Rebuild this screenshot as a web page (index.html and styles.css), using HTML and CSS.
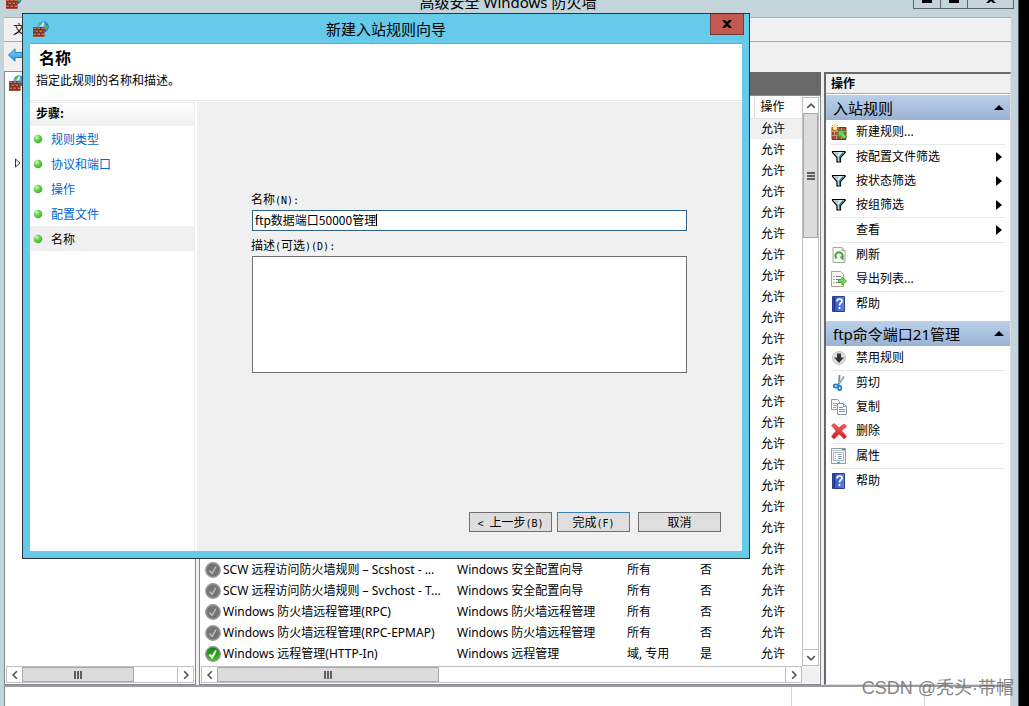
FILE: index.html
```html
<!DOCTYPE html>
<html lang="zh-CN">
<head>
<meta charset="utf-8">
<title>高级安全 Windows 防火墙</title>
<link rel="stylesheet" href="styles.css">
</head>
<body>
<svg class="sprite" aria-hidden="true">
  <defs>
    <radialGradient id="g-globe" cx="0.35" cy="0.35" r="0.7"><stop offset="0" stop-color="#c4f0ff"/><stop offset="0.5" stop-color="#3f9be0"/><stop offset="1" stop-color="#1a4ba8"/></radialGradient>
    <radialGradient id="g-dot" cx="0.35" cy="0.3" r="0.75"><stop offset="0" stop-color="#d5f5cd"/><stop offset="0.5" stop-color="#62cf45"/><stop offset="1" stop-color="#3fae2a"/></radialGradient>
    <linearGradient id="g-back" x2="0" y2="1"><stop offset="0" stop-color="#8fd6fa"/><stop offset="1" stop-color="#1f8fdc"/></linearGradient>
    <linearGradient id="g-help" x2="1" y2="0"><stop offset="0" stop-color="#26409e"/><stop offset="0.25" stop-color="#3c5cc4"/><stop offset="1" stop-color="#5f84e0"/></linearGradient>
    <linearGradient id="g-red" x2="0" y2="1"><stop offset="0" stop-color="#f4605c"/><stop offset="1" stop-color="#cf1d1d"/></linearGradient>
    <linearGradient id="g-ok" x2="0" y2="1"><stop offset="0" stop-color="#127a10"/><stop offset="1" stop-color="#3fc81e"/></linearGradient>
  </defs>
  <symbol id="firewall" viewBox="0 0 16 16">
    <circle cx="10" cy="5.800" r="5.600" fill="url(#g-globe)"/>
    <path d="M6 2l2.500-1.200 1 1.200-1.500 2-2 1.500zM12.500 3.500l2 0.500 0.500 3-1.500 2.500-1.500-2z" fill="#4fbb4c"/>
    <path d="M10.500 1.500q-1.500 1.500-.5 3.500" stroke="#e6f8ff" stroke-width="1.500" fill="none"/>
    <path d="M0 6h11.500v10h-11.500z" fill="#a94c39"/>
    <path d="M0 8.500h11.500M0 11.500h11.500M0 14.500h11.500M3.500 6v2M7.500 6v2M1.500 9v2M5.500 9v2M9.500 9v2M3.500 12v2M7.500 12v2" stroke="#7a3527" fill="none"/>
    <path d="M1 7.500h2M5 7.500h2M9 7.500h2M3 10.500h2M7 10.500h2M1 13.500h2M5 13.500h2M9 13.500h2" stroke="#c4765f" fill="none"/>
  </symbol>
  <symbol id="newrule" viewBox="0 0 16 16">
    <path d="M1 3.500h14v12h-14z" fill="#a65140" stroke="#70352a"/>
    <path d="M1 7.500h14M1 11.500h14M5.500 4v3M10.500 4v3M3.500 8v3M8.500 8v3M12.500 8v3M5.500 12v3M10.500 12v3" stroke="#c99585" fill="none"/>
    <path d="M4 0v8M0 4h8M1 1l6 6M7 1l-6 6" stroke="#f4a72c"/><circle cx="4" cy="4" r="2" fill="#fff3a0"/>
    <path d="M7 7l7-0.500-2 2 3.500 4-2.500 2.500-3.500-4-2 2z" fill="#6ddb59" stroke="#2f9a26" stroke-width="0.800"/>
  </symbol>
  <symbol id="filter" viewBox="0 0 16 16">
    <path d="M1.500 2.500h12.500v1l-4.500 5v4.500h-3.500v-4.500l-4.500-5z" fill="#dfe8e8" stroke="#000" stroke-width="1.200"/>
    <path d="M12.500 3.500l-4 4.500v4.500" stroke="#138a8a" stroke-width="1.500" fill="none"/>
    <path d="M3.500 3.500h4l-1 3z" fill="#b2b8b8"/>
  </symbol>
  <symbol id="refresh" viewBox="0 0 16 16">
    <path d="M2 .5h9l3 3v12h-12z" fill="#fbfbf7" stroke="#a6a69a"/><path d="M11 .5v3h3" fill="#ddd" stroke="#a6a69a"/>
    <path d="M5.500 11.500a3.600 3.600 0 1 1 5 0" fill="none" stroke="#35a835" stroke-width="2"/><path d="M8.500 9.500h4v4.500z" fill="#35a835"/>
  </symbol>
  <symbol id="export" viewBox="0 0 16 16">
    <path d="M.5 .5h9l3 3v12h-12z" fill="#fffdec" stroke="#a9a68c"/>
    <path d="M2.500 5.500h1M2.500 8.500h1M2.500 11.500h1M5 5.500h5M5 8.500h4M5 11.500h4" stroke="#6675a0"/>
    <path d="M7.500 8.500h3.500v-2.500l4.500 4-4.500 4v-2.500h-3.500z" fill="#74d750" stroke="#3c9f2b" stroke-width=".8"/>
  </symbol>
  <symbol id="help" viewBox="0 0 16 16">
    <path d="M1.500 .5h12v15h-12z" fill="url(#g-help)" stroke="#263f94"/><path d="M3.500 1v14" stroke="#203684"/>
    <path d="M6 5.500q0-2.500 2.500-2.500t2.500 2q0 1.200-1.500 2.300-1 .7-1 2.200M8.500 11v2" stroke="#fff" stroke-width="1.700" fill="none"/>
  </symbol>
  <symbol id="disable" viewBox="0 0 16 16">
    <circle cx="8" cy="8" r="6.500" fill="#dedede" stroke="#c6c6c6"/><path d="M6 3.500h4v4h3l-5 5.500-5-5.500h3z" fill="#333"/>
  </symbol>
  <symbol id="cut" viewBox="0 0 16 16">
    <path d="M8.500 0l-.5 9.500M13 1.500l-5.500 8" stroke="#7b8b99" stroke-width="1.800"/><path d="M12.500 1.500l-4.500 6.500" stroke="#dbe4ea" stroke-width=".7"/>
    <ellipse cx="5" cy="11" rx="2.300" ry="1.600" fill="none" stroke="#1d83cf" stroke-width="1.800"/><ellipse cx="8.700" cy="13" rx="1.600" ry="2.200" fill="none" stroke="#1d83cf" stroke-width="1.800"/>
  </symbol>
  <symbol id="copy" viewBox="0 0 16 16">
    <path d="M.5 .5h6l2 2v8h-8z" fill="#fff" stroke="#8d969e"/><path d="M2 4.500h4M2 6.500h4M2 8.500h3" stroke="#8aa8d0"/>
    <path d="M6.500 4.500h6l3 3v8h-9z" fill="#fff" stroke="#8d969e"/><path d="M12.500 4.500v3h3" fill="none" stroke="#8d969e"/><path d="M8 8.500h4M8 10.500h6M8 12.500h6" stroke="#6d96cc"/>
  </symbol>
  <symbol id="delete" viewBox="0 0 16 16">
    <path d="M.5 2.500l2.500-2q3 2 5 4.500 2.500-3 5.500-4l2 2.500q-3 2-5 4.500 3 2.500 5 5.500l-2.500 2.500q-2-3-5-5-2.500 2.500-5 5l-2.500-2.500q2-3 4.500-5.500-2-3-4.500-5.500z" fill="url(#g-red)" stroke="#d52c2c" stroke-width=".6"/>
  </symbol>
  <symbol id="props" viewBox="0 0 16 16">
    <path d="M.5 .5h14v15h-14z" fill="#f4f6f7" stroke="#929ba2"/><path d="M1 2.500h13" stroke="#b7c4cc"/><path d="M11 1.500h3" stroke="#3d80bd"/>
    <path d="M2.500 4.500h10v8h-10z" fill="#fff" stroke="#abb5bb"/><path d="M4 6.500h1M4 8.500h1M4 10.500h1M7 6.500h4M7 8.500h4M7 10.500h4" stroke="#8ea3b4"/><path d="M6 14.500h3" stroke="#23a6e0"/>
  </symbol>
  <symbol id="off" viewBox="0 0 16 16">
    <circle cx="8" cy="8" r="7.200" fill="#747474" stroke="#989898" stroke-width="1.500"/><path d="M4.500 8.500l2.500 3 4-7" fill="none" stroke="#bebebe" stroke-width="1.500"/>
  </symbol>
  <symbol id="on" viewBox="0 0 16 16">
    <circle cx="8" cy="8" r="7.200" fill="url(#g-ok)" stroke="#8b938b" stroke-width="1.500"/><path d="M4.500 8.500l2.500 3 4-7" fill="none" stroke="#fff" stroke-width="2"/>
  </symbol>
  <symbol id="dot" viewBox="0 0 10 10"><circle cx="5" cy="5" r="4.300" fill="url(#g-dot)"/></symbol>
  <symbol id="chev" viewBox="0 0 8 8"><path d="M5.500 1l-3 3 3 3" fill="none" stroke="#555" stroke-width="1.300"/></symbol>
  <symbol id="tri" viewBox="0 0 6 10"><path d="M0 0l6 5-6 5z" fill="#000"/></symbol>
  <symbol id="up" viewBox="0 0 10 5"><path d="M0 5l5-5 5 5z" fill="#000"/></symbol>
  <symbol id="grip" viewBox="0 0 8 8"><path d="M1 0v8M4 0v8M7 0v8" stroke="#606060" stroke-width="2"/></symbol>
</svg>

<div class="desktop">
  <main class="console">
    <header class="titlebar">
      <svg class="icon app-icon"><use href="#firewall"/></svg>
      <h1 class="title">高级安全 Windows 防火墙</h1>
      <div class="controls">
        <button class="ctl" aria-label="最小化"><svg width="10" height="3"><path d="M0 0h10v3H0z"/></svg></button>
        <button class="ctl" aria-label="最大化"><svg width="10" height="3"><path d="M0 0h10v3H0z"/></svg></button>
        <button class="ctl ctl-close" aria-label="关闭"><svg width="10" height="3"><path d="M0 3l3-3h4l3 3H7L5 1 3 3z"/></svg></button>
      </div>
    </header>
    <nav class="menubar"><button class="menu">文</button></nav>
    <div class="toolbar"><button class="tool" aria-label="后退"><svg width="16" height="14" viewBox="0 0 16 14"><path d="M.5 7L7 .8v3.700h9v5H7v3.700z" fill="url(#g-back)" stroke="#2a7fc0"/></svg></button></div>

    <div class="panes">
      <section class="tree" aria-label="树">
        <div class="tree-body">
          <svg class="icon"><use href="#firewall"/></svg>
          <svg class="expander" viewBox="0 0 6 10"><path d="M.5 1l4.500 4-4.500 4z" fill="#fff" stroke="#333"/></svg>
        </div>
        <div class="hscroll">
          <button class="sb" aria-label="向左"><svg class="chev"><use href="#chev"/></svg></button>
          <div class="thumb thumb-tree"><svg class="grip"><use href="#grip"/></svg></div>
          <div class="track"></div>
          <button class="sb" aria-label="向右"><svg class="chev flip"><use href="#chev"/></svg></button>
        </div>
      </section>

      <section class="middle">
        <div class="caption"></div>
        <div class="list">
          <div class="list-view">
            <table class="rules">
              <colgroup><col class="c-name"><col class="c-group"><col class="c-profile"><col class="c-enabled"><col class="c-action"></colgroup>
              <thead><tr><th></th><th></th><th></th><th></th><th class="sep">操作</th></tr></thead>
              <tbody>
                <tr class="current"><td colspan="4"></td><td>允许</td></tr>
                <tr><td colspan="4"></td><td>允许</td></tr>
                <tr><td colspan="4"></td><td>允许</td></tr>
                <tr><td colspan="4"></td><td>允许</td></tr>
                <tr><td colspan="4"></td><td>允许</td></tr>
                <tr><td colspan="4"></td><td>允许</td></tr>
                <tr><td colspan="4"></td><td>允许</td></tr>
                <tr><td colspan="4"></td><td>允许</td></tr>
                <tr><td colspan="4"></td><td>允许</td></tr>
                <tr><td colspan="4"></td><td>允许</td></tr>
                <tr><td colspan="4"></td><td>允许</td></tr>
                <tr><td colspan="4"></td><td>允许</td></tr>
                <tr><td colspan="4"></td><td>允许</td></tr>
                <tr><td colspan="4"></td><td>允许</td></tr>
                <tr><td colspan="4"></td><td>允许</td></tr>
                <tr><td colspan="4"></td><td>允许</td></tr>
                <tr><td colspan="4"></td><td>允许</td></tr>
                <tr><td colspan="4"></td><td>允许</td></tr>
                <tr><td colspan="4"></td><td>允许</td></tr>
                <tr><td colspan="4"></td><td>允许</td></tr>
                <tr><td colspan="4"></td><td>允许</td></tr>
                <tr><td><div class="rule"><svg class="icon"><use href="#off"/></svg>SCW 远程访问防火墙规则 – Scshost - ...</div></td><td>Windows 安全配置向导</td><td>所有</td><td>否</td><td>允许</td></tr>
                <tr><td><div class="rule"><svg class="icon"><use href="#off"/></svg>SCW 远程访问防火墙规则 – Svchost - T...</div></td><td>Windows 安全配置向导</td><td>所有</td><td>否</td><td>允许</td></tr>
                <tr><td><div class="rule"><svg class="icon"><use href="#off"/></svg>Windows 防火墙远程管理(RPC)</div></td><td>Windows 防火墙远程管理</td><td>所有</td><td>否</td><td>允许</td></tr>
                <tr><td><div class="rule"><svg class="icon"><use href="#off"/></svg>Windows 防火墙远程管理(RPC-EPMAP)</div></td><td>Windows 防火墙远程管理</td><td>所有</td><td>否</td><td>允许</td></tr>
                <tr><td><div class="rule"><svg class="icon"><use href="#on"/></svg>Windows 远程管理(HTTP-In)</div></td><td>Windows 远程管理</td><td>域, 专用</td><td>是</td><td>允许</td></tr>
              </tbody>
            </table>
          </div>
          <div class="vscroll">
            <button class="sb" aria-label="向上"><svg class="chev turn-up"><use href="#chev"/></svg></button>
            <div class="thumb thumb-v"><svg class="grip turn-up"><use href="#grip"/></svg></div>
            <div class="track"></div>
            <button class="sb" aria-label="向下"><svg class="chev turn-down"><use href="#chev"/></svg></button>
          </div>
          <div class="hscroll">
            <button class="sb" aria-label="向左"><svg class="chev"><use href="#chev"/></svg></button>
            <div class="thumb thumb-list"><svg class="grip"><use href="#grip"/></svg></div>
            <div class="track"></div>
            <button class="sb" aria-label="向右"><svg class="chev flip"><use href="#chev"/></svg></button>
          </div>
          <div class="corner"></div>
        </div>
      </section>

      <aside class="actions">
        <h2 class="actions-title">操作</h2>
        <section class="group">
          <h3 class="group-title">入站规则<svg class="up"><use href="#up"/></svg></h3>
          <button class="act line"><svg class="icon"><use href="#newrule"/></svg>新建规则...</button>
          <button class="act"><svg class="icon"><use href="#filter"/></svg>按配置文件筛选<svg class="tri"><use href="#tri"/></svg></button>
          <button class="act"><svg class="icon"><use href="#filter"/></svg>按状态筛选<svg class="tri"><use href="#tri"/></svg></button>
          <button class="act line"><svg class="icon"><use href="#filter"/></svg>按组筛选<svg class="tri"><use href="#tri"/></svg></button>
          <button class="act line"><span class="icon"></span>查看<svg class="tri"><use href="#tri"/></svg></button>
          <button class="act"><svg class="icon"><use href="#refresh"/></svg>刷新</button>
          <button class="act line"><svg class="icon"><use href="#export"/></svg>导出列表...</button>
          <button class="act"><svg class="icon"><use href="#help"/></svg>帮助</button>
        </section>
        <section class="group">
          <h3 class="group-title">ftp命令端口21管理<svg class="up"><use href="#up"/></svg></h3>
          <button class="act line"><svg class="icon"><use href="#disable"/></svg>禁用规则</button>
          <button class="act"><svg class="icon"><use href="#cut"/></svg>剪切</button>
          <button class="act"><svg class="icon"><use href="#copy"/></svg>复制</button>
          <button class="act line"><svg class="icon"><use href="#delete"/></svg>删除</button>
          <button class="act line"><svg class="icon"><use href="#props"/></svg>属性</button>
          <button class="act"><svg class="icon"><use href="#help"/></svg>帮助</button>
        </section>
      </aside>
    </div>
    <footer class="statusbar"><div class="cell cell-main"></div><div class="cell cell-mid"></div><div class="cell cell-end"></div></footer>
  </main>

  <div class="wizard" role="dialog" aria-labelledby="wizard-title">
    <header class="wizard-bar">
      <svg class="icon"><use href="#firewall"/></svg>
      <h2 class="wizard-title" id="wizard-title">新建入站规则向导</h2>
      <button class="wizard-close" aria-label="关闭"><svg width="10" height="8" viewBox="0 0 10 8"><path d="M0 0h3l2 2 2-2h3L6.500 4 10 8H7L5 6 3 8H0l3.500-4z"/></svg></button>
    </header>
    <div class="wizard-page">
      <div class="intro"><h3 class="intro-title">名称</h3><p class="intro-text">指定此规则的名称和描述。</p></div>
      <div class="wizard-body">
        <nav class="steps">
          <h4 class="steps-title">步骤:</h4>
          <a class="step" href="#type"><svg class="dot"><use href="#dot"/></svg>规则类型</a>
          <a class="step" href="#ports"><svg class="dot"><use href="#dot"/></svg>协议和端口</a>
          <a class="step" href="#action"><svg class="dot"><use href="#dot"/></svg>操作</a>
          <a class="step" href="#profile"><svg class="dot"><use href="#dot"/></svg>配置文件</a>
          <a class="step step-current" href="#name" aria-current="step"><svg class="dot"><use href="#dot"/></svg>名称</a>
        </nav>
        <form class="form">
          <div class="fields">
            <label class="label" for="rule-name">名称<span class="latin">(N):</span></label>
            <div class="name-box"><input class="name" id="rule-name" type="text" value="ftp数据端口50000管理"><span class="caret"></span></div>
            <label class="label" for="rule-desc">描述<span class="latin">(</span>可选<span class="latin">)(D):</span></label>
            <textarea class="desc" id="rule-desc"></textarea>
          </div>
          <div class="buttons">
            <button class="btn btn-back" type="button"><span class="latin">&lt; </span>上一步<span class="latin">(B)</span></button>
            <button class="btn btn-finish" type="button">完成<span class="latin">(F)</span></button>
            <button class="btn" type="button">取消</button>
          </div>
        </form>
      </div>
    </div>
  </div>
  <div class="watermark">CSDN @秃头·带帽</div>
</div>
</body>
</html>
```
FILE: styles.css
```css
* { box-sizing: border-box; }
body {
  margin: 0;
  font: 12px/20px "Noto Sans", "Noto Sans CJK SC", sans-serif;
  color: #000;
  background: #000;
}
h1, h2, h3, h4, p { margin: 0; font-weight: 400; }
button { margin: 0; padding: 0; border: 0; background: none; font: inherit; color: inherit; }
svg { display: block; flex: none; }
.sprite { position: absolute; width: 0; height: 0; }
.icon { width: 16px; height: 16px; flex: none; }

.desktop { position: relative; height: 100vh; overflow: hidden; padding-right: 10px; }

.console {
  display: flex;
  flex-direction: column;
  height: 100%;
  padding: 0 7px 0 4px;
  background: #c3d5db;
  border-right: 1px solid #46525a;
}
.titlebar { display: flex; justify-content: space-between; height: 17px; }
.app-icon { margin: -7px 81px 0 2px; }
.title { align-self: flex-end; font-size: 15px; line-height: 30px; }
.controls { display: flex; height: 9px; margin-right: -3px; }
.ctl { display: flex; justify-content: center; width: 27px; border: 1px solid #5b646c; border-width: 0 0 1px 1px; }
.ctl-close { width: 47px; border-right-width: 1px; }

.menubar { display: flex; height: 25px; padding-left: 9px; background: #f0f0f0; border-top: 1px solid #a8b2b8; border-bottom: 1px solid #a8a8a8; }
.toolbar { display: flex; align-items: center; height: 29px; padding: 0 0 4px 4px; background: #f0f0f0; }

.panes { display: flex; flex: 1; min-height: 0; gap: 3px; background: #f0f0f0; }
.tree { display: flex; flex-direction: column; flex: none; width: 192px; padding: 0 1px 1px; background: #fff; border: 1px solid #828790; }
.tree-body { flex: 1; padding: 3px 3px; }
.expander { width: 6px; height: 10px; margin: 67px 0 0 6px; }

.middle { display: flex; flex-direction: column; flex: 1; min-width: 0; padding-top: 1px; }
.caption { flex: none; height: 23px; background: #696969; }
.list {
  display: grid;
  grid-template: minmax(0, 1fr) 17px / minmax(0, 1fr) 17px;
  flex: 1;
  min-height: 0;
  padding: 1px;
  background: #fff;
  border: 1px solid #828790;
}
.list-view { overflow: hidden; }
.corner { background: #f0f0f0; }

.rules { width: 100%; table-layout: fixed; border-collapse: collapse; }
.rules tr { height: 21px; }
.rules th, .rules td { padding: 0; text-align: left; font-weight: 400; line-height: 20px; white-space: nowrap; }
.rules th { background: #fcfcfc; border-bottom: 1px solid #e5e5e5; }
.rules .sep { border-left: 1px solid #ddd; padding-left: 6px; }
.rules td:last-child { padding-left: 7px; }
.current { background: #f0f0f0; }
.c-name { width: 256px; }
.c-group { width: 170px; }
.c-profile { width: 73px; }
.c-enabled { width: 54px; }
.rule { display: flex; align-items: center; gap: 2px; padding-left: 4px; }

.hscroll { display: flex; height: 17px; border: 1px solid #c0c0c0; background: #fff; }
.vscroll { display: flex; flex-direction: column; width: 17px; border: 1px solid #c0c0c0; background: #fff; }
.sb { display: flex; align-items: center; justify-content: center; flex: none; width: 15px; height: 15px; }
.track { flex: 1; border: 0 solid #c0c0c0; }
.hscroll .track { border-right-width: 1px; }
.vscroll .track { border-bottom-width: 1px; }
.chev { width: 10px; height: 10px; }
.grip { width: 8px; height: 8px; }
.flip { transform: rotate(180deg); }
.turn-up { transform: rotate(90deg); }
.turn-down { transform: rotate(-90deg); }
.thumb { display: flex; align-items: center; justify-content: center; background: #dcdcdc; border: 1px solid #a8a8a8; }
.thumb-tree { width: 60%; }
.thumb-list { width: 37%; }
.thumb-v { height: 125px; }

.actions { flex: none; width: 187px; margin-top: 1px; background: #fff; border: 1px solid #696969; border-width: 2px 1px 1px 2px; border-color: #696969 #ddd #ddd #696969; }
.actions-title { height: 20px; padding-left: 5px; background: #f0f0f0; border-bottom: 1px solid #aaa; font-size: 12px; font-weight: 600; line-height: 20px; }
.group { display: flex; flex-direction: column; padding: 1px 0 4px; }
.group-title {
  display: flex;
  align-items: center;
  justify-content: space-between;
  height: 25px;
  padding: 0 6px 0 7px;
  font-size: 15px;
  background: linear-gradient(#bad0e9, #9ab3d3);
}
.up { width: 10px; height: 5px; }
.act { display: flex; align-items: center; gap: 9px; height: 24px; margin: 0 5px; text-align: left; }
.line { height: 25px; border-bottom: 1px solid #e8e8e8; }
.tri { width: 6px; height: 10px; margin: 0 3px 0 auto; }

.statusbar { display: flex; flex: none; height: 21px; background: #fff; border-top: 2px solid #9a9ca0; border-left: 1px solid #828790; }
.cell { border-right: 1px solid #d5d5d5; }
.cell-main { flex: 1; }
.cell-mid { width: 133px; }
.cell-end { width: 86px; }

.wizard {
  position: absolute;
  left: 22px;
  top: 13px;
  display: flex;
  flex-direction: column;
  width: 728px;
  height: 546px;
  padding: 0 7px 7px;
  background: #66caea;
  border: 1px solid #26363d;
  font-family: "Noto Sans CJK SC", sans-serif;
}
.wizard-bar { display: flex; align-items: center; justify-content: space-between; height: 29px; }
.wizard-bar .icon { margin-left: 3px; }
.wizard-title { margin-left: 13px; font-size: 15px; }
.wizard-close { display: flex; align-items: center; justify-content: center; align-self: flex-start; width: 34px; height: 21px; margin-right: -2px; background: #c35a50; border: 1px solid #733c3a; border-top: 0; }
.wizard-page { display: flex; flex-direction: column; flex: 1; background: #fff; border-top: 1px solid #72a9c4; }
.intro { height: 57px; padding: 3px 6px; border-bottom: 1px solid #e8e8e8; }
.intro-title { padding-left: 3px; font-size: 16px; font-weight: 700; line-height: 20px; }
.intro-text { padding-top: 3px; }
.wizard-body { display: flex; flex: 1; gap: 2px; padding-top: 1px; }
.steps { width: 165px; border-right: 1px solid #ebebeb; }
.steps-title { height: 24px; padding-left: 6px; border-top: 1px solid #ebebeb; font-weight: 700; line-height: 20px; background: linear-gradient(#fff, #f0f0f0); }
.step { display: flex; align-items: center; gap: 8px; height: 25px; padding-left: 3px; color: #0066cc; text-decoration: none; }
.step-current { background: #f0f0f0; color: #000; }
.dot { width: 10px; height: 10px; }
.form { display: flex; flex-direction: column; justify-content: space-between; flex: 1; padding: 88px 21px 19px 54px; background: #f0f0f0; }
.fields { display: flex; flex-direction: column; padding-right: 34px; }
.label { height: 20px; line-height: 18px; }
.latin { font-family: "DejaVu Sans Mono", monospace; font-size: 10px; line-height: 10px; white-space: pre; }
.name-box { position: relative; display: flex; margin: 0 0 5px 1px; }
.name { flex: 1; min-width: 0; height: 21px; padding: 0 2px 3px; border: 1px solid #2c628b; border-radius: 0; outline: 0; background: #fff; font: inherit; color: #000; }
.caret { position: absolute; left: 124px; top: 4px; width: 1px; height: 12px; background: #000; }
.desc { height: 117px; margin: 0 0 0 1px; padding: 3px; border: 1px solid #707070; border-radius: 0; background: #fff; font: inherit; resize: none; }
.buttons { display: flex; justify-content: flex-end; }
.btn { width: 83px; height: 20px; line-height: 18px; background: #dedede; border: 1px solid #707070; }
.btn-back { margin-right: 5px; }
.btn-finish { width: 73px; margin-right: 8px; border-color: #3c7fb1; }

.watermark { position: absolute; right: 15px; bottom: 4px; font: 18px/28px "Liberation Sans", "Noto Sans CJK SC", sans-serif; color: rgba(110, 110, 110, 0.85); }
```
